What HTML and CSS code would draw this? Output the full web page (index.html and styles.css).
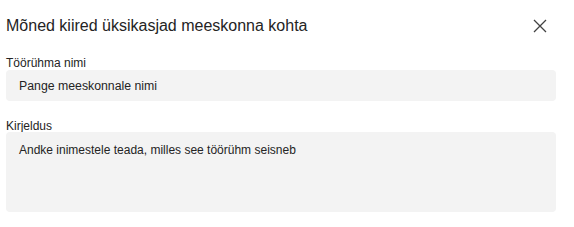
FILE: index.html
```html
<!DOCTYPE html>
<html lang="et">
<head>
    <meta charset="UTF-8">
    <meta name="viewport" content="width=device-width, initial-scale=1.0">
    <title>Meeskonna üksikasjad</title>
    <link rel="stylesheet" href="styles.css">
</head>
<body>
    <div class="dialog">
        <div class="dialog-header">
            <h2 class="dialog-title">Mõned kiired üksikasjad meeskonna kohta</h2>
            <button class="close" aria-label="Sule">
                <svg width="14" height="14" viewBox="0 0 14 14">
                    <path d="M1 1 L13 13 M13 1 L1 13" stroke="#424242" stroke-width="1.3" fill="none"/>
                </svg>
            </button>
        </div>

        <div class="field">
            <label for="team-name">Töörühma nimi</label>
            <input type="text" id="team-name" placeholder="Pange meeskonnale nimi">
        </div>

        <div class="field desc">
            <label for="team-desc">Kirjeldus</label>
            <textarea id="team-desc" placeholder="Andke inimestele teada, milles see töörühm seisneb"></textarea>
        </div>
    </div>
</body>
</html>
```

FILE: styles.css
```css
* {
  box-sizing: border-box;
  margin: 0;
  padding: 0;
}

body {
  font-family: 'Liberation Sans', Arial, sans-serif;
  background-color: #fff;
  color: #242424;
}

.dialog {
  width: 574px;
  padding: 14px 18px 0 6px;
}

.dialog-header {
  display: flex;
  justify-content: space-between;
  align-items: center;
  height: 24px;
  margin-bottom: 18px;
}

.dialog-title {
  font-size: 16px;
  font-weight: normal;
  color: #242424;
}

.close {
  width: 24px;
  height: 24px;
  margin-right: 4px;
  border: none;
  background: none;
  display: flex;
  justify-content: center;
  align-items: center;
  cursor: pointer;
}

.field {
  display: flex;
  flex-direction: column;
  margin-bottom: 19px;
}

.field label {
  font-size: 12px;
  line-height: 14px;
}

.field.desc label {
  line-height: 12px;
}

input[type="text"], textarea {
  width: 100%;
  border: none;
  border-radius: 4px;
  background-color: #f3f3f3;
  font-family: inherit;
  font-size: 12.3px;
  color: #242424;
  padding: 0 13px;
  outline: none;
}

input[type="text"] {
  height: 31px;
}

textarea {
  height: 80px;
  padding-top: 11px;
  font-size: 12px;
  resize: none;
}

input::placeholder, textarea::placeholder {
  color: #242424;
  opacity: 1;
}
```
